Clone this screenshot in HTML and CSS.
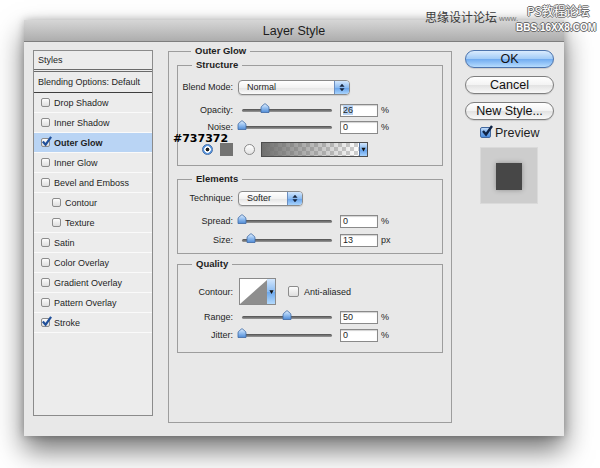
FILE: index.html
```html
<!DOCTYPE html>
<html>
<head>
<meta charset="utf-8">
<title>Layer Style</title>
<link rel="stylesheet" href="styles.css">
</head>
<body>
<svg class="defs" width="0" height="0" aria-hidden="true">
  <defs>
    <linearGradient id="thumbg" x1="0" y1="0" x2="0" y2="1">
      <stop offset="0" stop-color="#e4f0fd"/>
      <stop offset="0.45" stop-color="#9cc4f2"/>
      <stop offset="1" stop-color="#4f8bd6"/>
    </linearGradient>
  </defs>
</svg>

<div class="watermark">
  <span class="wm-cn">思缘设计论坛</span>
  <span class="wm-www">www.</span>
  <span class="wm-ps">PS教程论坛</span>
  <span class="wm-bbs">BBS.16XX8.COM</span>
</div>

<div class="window">
  <div class="titlebar">Layer Style</div>
  <div class="content">

    <div class="styles-panel">
      <div class="sp-head">Styles</div>
      <div class="sp-blend">Blending Options: Default</div>
      <div class="sp-item"><span class="cb"></span>Drop Shadow</div>
      <div class="sp-item"><span class="cb"></span>Inner Shadow</div>
      <div class="sp-item active"><span class="cb"><svg viewBox="0 0 12 12"><path d="M2 6 L5 9.5 L11 1"/></svg></span>Outer Glow</div>
      <div class="sp-item"><span class="cb"></span>Inner Glow</div>
      <div class="sp-item"><span class="cb"></span>Bevel and Emboss</div>
      <div class="sp-item sub"><span class="cb"></span>Contour</div>
      <div class="sp-item sub"><span class="cb"></span>Texture</div>
      <div class="sp-item"><span class="cb"></span>Satin</div>
      <div class="sp-item"><span class="cb"></span>Color Overlay</div>
      <div class="sp-item"><span class="cb"></span>Gradient Overlay</div>
      <div class="sp-item"><span class="cb"></span>Pattern Overlay</div>
      <div class="sp-item"><span class="cb"><svg viewBox="0 0 12 12"><path d="M2 6 L5 9.5 L11 1"/></svg></span>Stroke</div>
    </div>

    <div class="group outer">
      <div class="legend">Outer Glow</div>

      <div class="group structure">
        <div class="legend">Structure</div>
        <div class="annot">#737372</div>
        <div class="row r-blend">
          <span class="lbl">Blend Mode:</span>
          <div class="popup w-blend"><span class="ptext">Normal</span><span class="arrows"><svg viewBox="0 0 7 10"><path d="M3.5 0.5 L6.5 4 H0.5Z M0.5 6 H6.5 L3.5 9.5Z"/></svg></span></div>
        </div>
        <div class="row r-op">
          <span class="lbl">Opacity:</span>
          <div class="slider"><div class="track"><svg class="thumb" style="left:26%" viewBox="0 0 10 10"><path d="M1 9.5 V5 Q1 3.8 2.2 2.8 L5 0.6 L7.8 2.8 Q9 3.8 9 5 V9.5 Z"/></svg></div></div>
          <span class="num"><span class="sel">26</span></span><span class="unit">%</span>
        </div>
        <div class="row r-noise">
          <span class="lbl">Noise:</span>
          <div class="slider"><div class="track"><svg class="thumb" style="left:0%" viewBox="0 0 10 10"><path d="M1 9.5 V5 Q1 3.8 2.2 2.8 L5 0.6 L7.8 2.8 Q9 3.8 9 5 V9.5 Z"/></svg></div></div>
          <span class="num">0</span><span class="unit">%</span>
        </div>
        <div class="color-row">
          <span class="radio on"></span>
          <span class="swatch"></span>
          <span class="radio"></span>
          <div class="gradbox"><div class="grad"></div><span class="drop"><svg viewBox="0 0 6 6"><path d="M0.5 1 H5.5 L3 5.5Z"/></svg></span></div>
        </div>
      </div>

      <div class="group elements">
        <div class="legend">Elements</div>
        <div class="row r-tech">
          <span class="lbl">Technique:</span>
          <div class="popup w-tech"><span class="ptext">Softer</span><span class="arrows"><svg viewBox="0 0 7 10"><path d="M3.5 0.5 L6.5 4 H0.5Z M0.5 6 H6.5 L3.5 9.5Z"/></svg></span></div>
        </div>
        <div class="row r-spread">
          <span class="lbl">Spread:</span>
          <div class="slider"><div class="track"><svg class="thumb" style="left:0%" viewBox="0 0 10 10"><path d="M1 9.5 V5 Q1 3.8 2.2 2.8 L5 0.6 L7.8 2.8 Q9 3.8 9 5 V9.5 Z"/></svg></div></div>
          <span class="num">0</span><span class="unit">%</span>
        </div>
        <div class="row r-size">
          <span class="lbl">Size:</span>
          <div class="slider"><div class="track"><svg class="thumb" style="left:10%" viewBox="0 0 10 10"><path d="M1 9.5 V5 Q1 3.8 2.2 2.8 L5 0.6 L7.8 2.8 Q9 3.8 9 5 V9.5 Z"/></svg></div></div>
          <span class="num">13</span><span class="unit">px</span>
        </div>
      </div>

      <div class="group quality">
        <div class="legend">Quality</div>
        <div class="row r-contour">
          <span class="lbl">Contour:</span>
          <div class="contour">
            <svg class="curve" viewBox="0 0 27 25" preserveAspectRatio="none"><rect width="27" height="25" fill="#fff"/><path d="M0 25 L27 1 V25 Z" fill="#8e8e8e"/></svg>
            <span class="cdrop"><svg viewBox="0 0 6 6"><path d="M0.5 1 H5.5 L3 5.5Z"/></svg></span>
          </div>
          <span class="cb big"></span><span class="aa">Anti-aliased</span>
        </div>
        <div class="row r-range">
          <span class="lbl">Range:</span>
          <div class="slider"><div class="track"><svg class="thumb" style="left:50%" viewBox="0 0 10 10"><path d="M1 9.5 V5 Q1 3.8 2.2 2.8 L5 0.6 L7.8 2.8 Q9 3.8 9 5 V9.5 Z"/></svg></div></div>
          <span class="num">50</span><span class="unit">%</span>
        </div>
        <div class="row r-jitter">
          <span class="lbl">Jitter:</span>
          <div class="slider"><div class="track"><svg class="thumb" style="left:0%" viewBox="0 0 10 10"><path d="M1 9.5 V5 Q1 3.8 2.2 2.8 L5 0.6 L7.8 2.8 Q9 3.8 9 5 V9.5 Z"/></svg></div></div>
          <span class="num">0</span><span class="unit">%</span>
        </div>
      </div>
    </div>

    <div class="side">
      <div class="btn default">OK</div>
      <div class="btn">Cancel</div>
      <div class="btn">New Style...</div>
      <div class="preview-row"><span class="pcb"><svg viewBox="0 0 12 12"><path d="M2 6 L5 9.5 L11 1"/></svg></span><span>Preview</span></div>
      <div class="preview"><div class="psq"></div></div>
    </div>

  </div>
</div>
</body>
</html>
```

FILE: styles.css
```css
* { box-sizing: border-box; }
html, body { margin: 0; padding: 0; }
body {
  width: 600px;
  height: 468px;
  background: #ffffff;
  font-family: "Liberation Sans", Arial, sans-serif;
  color: #1e1e1e;
  position: relative;
  overflow: hidden;
}
.defs { position: absolute; width: 0; height: 0; }

/* watermark (overlay) */
.watermark { position: absolute; left: 0; top: 0; width: 600px; height: 40px; z-index: 2; }
.watermark span { position: absolute; white-space: nowrap; }
.wm-cn { left: 425px; top: 10px; font: 12px/14px "Noto Sans CJK SC", sans-serif; color: #3a3a3a; }
.wm-www { left: 499px; top: 14px; font: 8px/10px "Liberation Sans", sans-serif; color: #777; }
.wm-ps {
  left: 527px; top: 4px; font: 12px/14px "Noto Sans CJK SC", sans-serif; color: #fff;
  text-shadow: 1px 0 #6a6a6a, -1px 0 #6a6a6a, 0 1px #6a6a6a, 0 -1px #6a6a6a;
}
.wm-bbs {
  left: 516px; top: 22px; font: bold 10px/12px "Liberation Sans", sans-serif; color: #fff;
  text-shadow: 1px 0 #6a6a6a, -1px 0 #6a6a6a, 0 1px #6a6a6a, 0 -1px #6a6a6a;
}

/* window */
.window {
  margin: 20px 0 0 24px;
  width: 540px;
  height: 416px;
  background: #e8e8e8;
  box-shadow: 0 14px 26px rgba(0,0,0,0.55), 0 0 8px rgba(0,0,0,0.25);
  display: flex;
  flex-direction: column;
}
.titlebar {
  height: 22px;
  flex: none;
  background: linear-gradient(#d6d6d6, #adadad);
  border-bottom: 1px solid #7e7e7e;
  text-align: center;
  font-size: 12.5px;
  line-height: 22px;
  color: #1c1c1c;
}
.content {
  flex: 1;
  display: flex;
  align-items: flex-start;
  padding: 8px 10px 0 9px;
}

/* styles list */
.styles-panel {
  width: 120px;
  height: 366px;
  flex: none;
  border: 1px solid #8b8b8b;
  background: #ececec;
  font-size: 9px;
}
.sp-head {
  height: 21px;
  line-height: 18px;
  padding-left: 4px;
  border-bottom: 3px double #6a6a6a;
}
.sp-blend {
  height: 21px;
  line-height: 21px;
  padding-left: 4px;
  border-bottom: 1px solid #3f3f3f;
}
.sp-item {
  height: 20px;
  display: flex;
  align-items: center;
  gap: 4px;
  padding-left: 7px;
  border-bottom: 1px solid #fafafa;
}
.sp-item.sub { padding-left: 18px; }
.sp-item.active { background: #b9d4f4; font-weight: bold; }

.cb {
  position: relative;
  flex: none;
  width: 9px;
  height: 9px;
  border: 1px solid #8c8c8c;
  border-radius: 2px;
  background: linear-gradient(#fdfdfd, #dedede);
}
.cb svg {
  position: absolute;
  left: -1px;
  top: -3px;
  width: 11px;
  height: 11px;
  fill: none;
  stroke: #1f4f9a;
  stroke-width: 2.4;
}
.cb.big { width: 11px; height: 11px; margin-left: 12px; }

/* groups */
.group { border: 1px solid #9d9d9d; }
.legend {
  display: table;
  height: 12px;
  line-height: 12px;
  margin: -7px 0 0 14px;
  padding: 0 4px;
  background: #e8e8e8;
  font-weight: bold;
  font-size: 9.5px;
}
.outer {
  width: 284px;
  height: 372px;
  flex: none;
  margin: 1px 13px 0 15px;
  padding: 0 8px;
}
.structure { position: relative; margin-top: 8px; padding-bottom: 8px; }
.elements { margin-top: 13px; padding-bottom: 6px; }
.quality { margin-top: 10px; padding-bottom: 10px; }

.annot {
  position: absolute;
  left: -5px;
  top: 67px;
  font: bold 11px/11px "DejaVu Sans", sans-serif;
  color: #000;
  z-index: 1;
}

.row { display: flex; align-items: center; height: 14px; font-size: 9px; }
.lbl { width: 55px; flex: none; text-align: right; margin-right: 5px; white-space: nowrap; line-height: 10px; }

.r-blend { height: 16px; margin-top: 8px; }
.r-op { margin-top: 8px; }
.r-noise { margin-top: 3px; }
.r-tech { height: 16px; margin-top: 5px; }
.r-spread { margin-top: 8px; }
.r-size { margin-top: 5px; }
.r-contour { height: 27px; margin-top: 8px; }
.r-range { margin-top: 5px; }
.r-jitter { margin-top: 4px; }

/* popup */
.popup {
  display: flex;
  align-items: center;
  height: 15px;
  border: 1px solid #8a8a8a;
  border-radius: 4px;
  background: linear-gradient(#ffffff, #f2f2f2 50%, #e3e3e3 51%, #fbfbfb);
  box-shadow: 0 1px 1px rgba(0,0,0,0.12);
  overflow: hidden;
}
.w-blend { width: 112px; }
.w-tech { width: 65px; }
.ptext { padding-left: 8px; font-size: 9px; }
.arrows {
  margin-left: auto;
  width: 15px;
  height: 100%;
  display: flex;
  align-items: center;
  justify-content: center;
  border-left: 1px solid #6b8ec0;
  background: linear-gradient(#d3e7fd, #8cbcf2 50%, #63a0ea 51%, #a9d4fd);
}
.arrows svg { width: 6px; height: 9px; fill: #17253d; }

/* slider */
.slider {
  width: 97px;
  height: 14px;
  flex: none;
  display: flex;
  align-items: center;
  padding: 0 3px 0 4px;
}
.track {
  position: relative;
  flex: 1;
  height: 3px;
  border-radius: 2px;
  background: linear-gradient(#4f4f4f, #9a9a9a);
}
.thumb {
  position: absolute;
  top: -6px;
  width: 10px;
  height: 10px;
  margin-left: -5px;
  fill: url(#thumbg);
  stroke: #3f69a4;
  stroke-width: 0.8;
}
.num {
  width: 38px;
  height: 13px;
  flex: none;
  margin-left: 5px;
  border: 1px solid #8a8a8a;
  background: #fff;
  box-shadow: inset 0 1px 1px rgba(0,0,0,0.18);
  font-size: 9px;
  line-height: 11px;
  padding-left: 2px;
}
.sel { background: #b8d3f3; }
.unit { margin-left: 3px; font-size: 9px; }

/* colour row */
.color-row {
  display: flex;
  align-items: center;
  height: 16px;
  margin-top: 7px;
  padding-left: 24px;
}
.radio {
  width: 11px;
  height: 11px;
  flex: none;
  border-radius: 50%;
  border: 1px solid #8a8a8a;
  background: linear-gradient(#ffffff, #e2e2e2);
  margin-right: 11px;
}
.radio.on {
  border-color: #456fa8;
  background: radial-gradient(circle, #1d1d1d 0 1.6px, #ffffff 2.2px 3px, #5f9be3 3.6px);
  margin-right: 7px;
}
.swatch {
  width: 13px;
  height: 13px;
  flex: none;
  background: #737372;
  margin-right: 11px;
}
.color-row .radio:last-of-type { margin-right: 6px; }
.gradbox {
  display: flex;
  width: 107px;
  height: 15px;
  border: 1px solid #4e4e4e;
}
.grad {
  flex: 1;
  background:
    linear-gradient(to right, #6f6f6e, rgba(115,115,114,0)),
    repeating-conic-gradient(#cfcfcf 0 25%, #ffffff 0 50%) 0 0 / 8px 8px;
}
.drop {
  width: 8px;
  display: flex;
  align-items: center;
  justify-content: center;
  border-left: 1px solid #4e6f9e;
  background: linear-gradient(#d3e7fd, #7db3ef 50%, #5f9de9 51%, #a6d2fd);
}
.drop svg { width: 5px; height: 5px; fill: #111; }

/* contour */
.contour {
  display: flex;
  width: 37px;
  height: 27px;
  margin-left: 1px;
  border: 1px solid #8a8a8a;
}
.curve { width: 27px; height: 25px; display: block; }
.cdrop {
  flex: 1;
  display: flex;
  align-items: center;
  justify-content: center;
  background: linear-gradient(#d3e7fd, #8cbcf2 50%, #6aa6ec 51%, #b4dafd);
}
.cdrop svg { width: 5px; height: 6px; fill: #111; }
.aa { margin-left: 5px; font-size: 9px; }

/* side column */
.side {
  width: 89px;
  flex: none;
  display: flex;
  flex-direction: column;
}
.btn {
  height: 18px;
  border: 1px solid #7f7f7f;
  border-radius: 9px;
  background: linear-gradient(#ffffff, #f3f3f3 50%, #e2e2e2 51%, #f8f8f8);
  text-align: center;
  font-size: 12.5px;
  line-height: 16px;
  color: #111;
  margin-bottom: 8px;
  box-shadow: 0 1px 1px rgba(0,0,0,0.12);
}
.btn.default {
  border-color: #4d74ad;
  background: linear-gradient(#d9ebfe, #a1cbf7 50%, #70abf0 51%, #b6dcfe);
}
.preview-row {
  display: flex;
  align-items: center;
  gap: 4px;
  height: 13px;
  margin: -2px 0 0 15px;
  font-size: 12.5px;
}
.pcb {
  position: relative;
  width: 11px;
  height: 11px;
  flex: none;
  border: 1px solid #41679e;
  border-radius: 2px;
  background: linear-gradient(#c3dcf8, #6ea6ea 55%, #4d8ede);
}
.pcb svg {
  position: absolute;
  left: 0;
  top: -3px;
  width: 12px;
  height: 12px;
  fill: none;
  stroke: #0f2446;
  stroke-width: 2.4;
}
.preview {
  width: 58px;
  height: 57px;
  margin: 8px 0 0 15px;
  background: #cdcdcd;
  border: 1px solid #dadada;
  padding: 15px;
}
.psq {
  width: 26px;
  height: 27px;
  background: #474747;
  box-shadow: 0 0 5px rgba(0,0,0,0.3);
}
```
